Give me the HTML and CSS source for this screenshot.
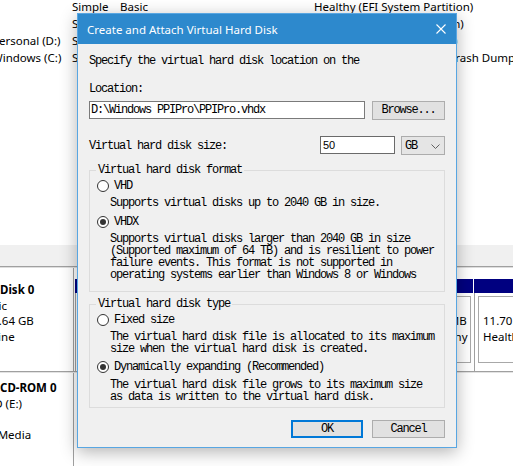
FILE: index.html
```html
<!DOCTYPE html>
<html>
<head>
<meta charset="utf-8">
<title>Create and Attach Virtual Hard Disk</title>
<link rel="stylesheet" href="styles.css">
</head>
<body>
<div class="mmc">
  <div class="volumes">
    <div class="vrow"><span class="c-name"></span><span>Simple</span><span>Basic</span><span></span><span>Healthy (EFI System Partition)</span></div>
    <div class="vrow"><span class="c-name"></span><span>Simple</span><span>Basic</span><span>NTFS</span><span>Healthy (Recovery Partition)</span></div>
    <div class="vrow"><span class="c-name">Personal (D:)</span><span>Simple</span><span>Basic</span><span>NTFS</span><span>Healthy (Primary Partition)</span></div>
    <div class="vrow"><span class="c-name">Windows (C:)</span><span>Simple</span><span>Basic</span><span>NTFS</span><span>Healthy (Boot, Page File, Crash Dump, Primary Partition)</span></div>
  </div>
  <div class="splitter"></div>
  <div class="disks">
    <div class="disk disk0">
      <div class="dlabel">
        <div class="dl-inner">
          <div class="dname">Disk 0</div>
          <div>Basic</div>
          <div>476.64 GB</div>
          <div>Online</div>
        </div>
      </div>
      <div class="parts">
        <div class="part part-a">
          <div class="pbar"></div>
          <div class="pbody"><div class="pinner"><div>Windows (C:)</div><div>464.49 GB NTFS</div><div>Healthy (Boot, Page File, Crash Dump, Primary Partition)</div></div></div>
        </div>
        <div class="part part-b">
          <div class="pbar"></div>
          <div class="pbody"><div class="pinner"><div>&nbsp;</div><div>499 MB</div><div>Healthy (Recovery Partition)</div></div></div>
        </div>
        <div class="part part-c">
          <div class="pbar"></div>
          <div class="pbody"><div class="pinner"><div>&nbsp;</div><div>11.70 GB</div><div>Healthy (OEM Partition)</div></div></div>
        </div>
      </div>
    </div>
    <div class="disk cdrom">
      <div class="dlabel">
        <div class="dl-inner cd-inner">
          <div class="dname">CD-ROM 0</div>
          <div>DVD (E:)</div>
          <div>&nbsp;</div>
          <div>No Media</div>
        </div>
      </div>
      <div class="parts"></div>
    </div>
  </div>
</div>

<div class="dialog">
  <div class="titlebar">
    <span class="title">Create and Attach Virtual Hard Disk</span>
    <svg class="close" width="10" height="10" viewBox="0 0 10 10"><path d="M0.5 0.5L9.5 9.5M9.5 0.5L0.5 9.5" stroke="#fff" stroke-width="1.1" fill="none"/></svg>
  </div>
  <div class="dbody">
    <p class="intro">Specify the virtual hard disk location on the</p>
    <p class="loc-label">Location:</p>
    <div class="loc-row">
      <div class="textbox path">D:\Windows PPIPro\PPIPro.vhdx</div>
      <div class="btn browse">Browse...</div>
    </div>
    <div class="size-row">
      <span class="size-label">Virtual hard disk size:</span>
      <div class="textbox num">50</div>
      <div class="combo"><span>GB</span><svg width="9" height="5" viewBox="0 0 9 5"><path d="M0.5 0.5L4.5 4.5L8.5 0.5" stroke="#606060" fill="none" stroke-width="1"/></svg></div>
    </div>
    <fieldset class="group g-format">
      <legend>Virtual hard disk format</legend>
      <div class="radio"><span class="circle"></span><span>VHD</span></div>
      <p class="desc">Supports virtual disks up to 2040 GB in size.</p>
      <div class="radio r-next"><span class="circle checked"></span><span>VHDX</span></div>
      <p class="desc">Supports virtual disks larger than 2040 GB in size<br>(Supported maximum of 64 TB) and is resilient to power<br>failure events. This format is not supported in<br>operating systems earlier than Windows 8 or Windows</p>
    </fieldset>
    <fieldset class="group g-type">
      <legend>Virtual hard disk type</legend>
      <div class="radio"><span class="circle"></span><span>Fixed size</span></div>
      <p class="desc">The virtual hard disk file is allocated to its maximum<br>size when the virtual hard disk is created.</p>
      <div class="radio r-next2"><span class="circle checked"></span><span>Dynamically expanding (Recommended)</span></div>
      <p class="desc d-last">The virtual hard disk file grows to its maximum size<br>as data is written to the virtual hard disk.</p>
    </fieldset>
    <div class="buttons">
      <div class="btn ok">OK</div>
      <div class="btn cancel">Cancel</div>
    </div>
  </div>
</div>
</body>
</html>
```
FILE: styles.css
```css
* { box-sizing: border-box; margin: 0; padding: 0; }
html, body { width: 513px; height: 466px; overflow: hidden; background: #fff; }
body { position: relative; font-family: "Noto Sans", "Open Sans", sans-serif; font-size: 11.5px; color: #000; }

/* background console */
.mmc { display: flex; flex-direction: column; height: 466px; }
.volumes { display: flex; flex-direction: column; height: 245px; }
.vrow {
  display: grid;
  grid-template-columns: 80px 48px 66px 128px auto;
  margin-left: -8px;
  height: 17px;
  line-height: 17px;
  white-space: nowrap;
}
.vrow:first-child { margin-top: -2px; }
.splitter { height: 22px; background: #f0f0f0; border-bottom: 1px solid #a0a0a0; }
.disks { border-top: 1px solid #dedede; flex: 1; display: flex; flex-direction: column; }
.disk { display: flex; }
.disk0 { height: 104px; border-bottom: 1px solid #a0a0a0; }
.cdrom { flex: 1; border-top: 1px solid #e3e3e3; }
.dlabel { width: 74px; border-right: 1px solid #a0a0a0; overflow: hidden; white-space: nowrap; }
.dl-inner { margin-left: -21px; padding-top: 14px; line-height: 15.5px; }
.cd-inner { padding-top: 7px; }
.dname { font-weight: bold; padding-left: 21px; }
.parts { flex: 1; display: flex; gap: 1px; padding: 11px 0 0 1px; overflow: hidden; }
.part { display: flex; flex-direction: column; flex: none; }
.part-a { width: 341px; }
.part-b { width: 56px; }
.part-c { width: 60px; }
.pbar { height: 14px; background: #000080; }
.pbody { flex: 1; padding: 3px 2px 0 3px; border-left: 1px solid #a0a0a0; }
.pinner {
  height: 67px;
  border: 1px solid #a8a8a8;
  background: #fff;
  padding: 0 0 0 4px;
  line-height: 16px;
  white-space: nowrap;
  overflow: hidden;
}

/* dialog */
.dialog {
  position: absolute;
  left: 77px;
  top: 13px;
  width: 380px;
  border: 1px solid #58a6e2;
  background: #f0f0f0;
  box-shadow: 0 4px 16px rgba(0, 0, 0, 0.3);
}
.titlebar {
  height: 30px;
  background: #2d89cd;
  display: flex;
  align-items: center;
  padding: 0 10px 0 9px;
  color: #fff;
}
.title { font-family: "Noto Sans", sans-serif; font-size: 11.5px; }
.close { margin-left: auto; }
.dbody {
  padding: 10px 11px 9px 11px;
  font-family: "Liberation Mono", monospace;
  font-size: 12px;
  letter-spacing: -1.2px;
  line-height: 14px;
  display: flex;
  flex-direction: column;
}
.loc-label { margin-top: 14px; }
.loc-row { margin-top: 5px; display: flex; gap: 7px; align-items: flex-start; }
.textbox { background: #fff; border: 1px solid #7a7a7a; height: 18px; line-height: 16px; white-space: nowrap; }
.path { flex: 1; padding-left: 1px; }
.btn {
  background: #e1e1e1;
  border: 1px solid #adadad;
  height: 18px;
  line-height: 16px;
  text-align: center;
}
.browse { width: 73px; height: 19px; line-height: 17px; }
.size-row { margin-top: 16px; display: flex; align-items: center; height: 19px; }
.size-label { flex: 1; }
.num {
  width: 75px;
  font-family: "Liberation Sans", sans-serif;
  font-size: 11px;
  letter-spacing: 0;
  padding-left: 2px;
  align-self: flex-start;
  border-color: #6a6a6a;
}
.combo {
  margin-left: 6px;
  width: 44px;
  height: 19px;
  background: #e5e5e5;
  border: 1px solid #acacac;
  display: flex;
  align-items: center;
  justify-content: space-between;
  padding: 0 4px 0 3px;
}
.combo svg { margin-top: 1px; }
.group {
  border: 1px solid #dcdcdc;
  min-width: 0;
  padding: 0 0 10px 0;
}
.g-format { margin-top: 8px; }
.g-type { margin-top: 5px; padding-bottom: 4px; }
.group legend { margin-left: 6px; padding: 0 2px; line-height: 14px; }
.radio { display: flex; align-items: center; margin-top: 2px; padding-left: 7px; height: 14px; }
.r-next { margin-top: 6px; }
.r-next2 { margin-top: 5px; }
.circle {
  width: 12px;
  height: 12px;
  border-radius: 50%;
  border: 1px solid #333;
  background: #fff;
  margin-right: 5px;
  display: flex;
  align-items: center;
  justify-content: center;
  flex: none;
}
.circle.checked::after {
  content: "";
  width: 6px;
  height: 6px;
  border-radius: 50%;
  background: #333;
}
.desc { margin-top: 4px; padding-left: 20px; line-height: 12px; white-space: nowrap; }
.d-last { margin-top: 5px; }
.buttons { margin-top: 12px; display: flex; justify-content: flex-end; gap: 9px; }
.ok { width: 72px; border: 2px solid #0078d7; line-height: 14px; }
.cancel { width: 73px; }
```
